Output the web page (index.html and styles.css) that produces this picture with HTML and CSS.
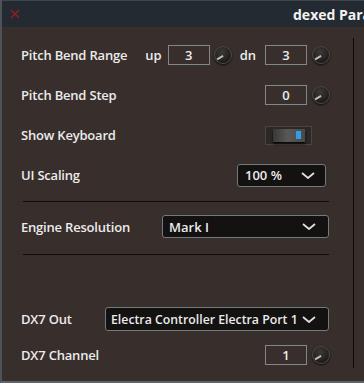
FILE: index.html
```html
<!DOCTYPE html>
<html lang="en">
<head>
  <meta charset="UTF-8">
  <title>dexed Parameters</title>
  <link rel="stylesheet" href="styles.css">
</head>
<body>
  <div class="window">
    <div class="titlebar">
      <svg class="close" viewBox="0 0 10 10"><path d="M1 1L9 9M9 1L1 9" stroke="#8e1d25" stroke-width="1.6"/></svg>
      <span class="title">dexed Parameters</span>
    </div>

    <div class="content">
      <div class="panel">
        <div class="row">
          <span class="label">Pitch Bend Range</span>
          <span class="tag">up</span>
          <div class="num">3</div>
          <div class="knob"></div>
          <span class="tag dn">dn</span>
          <div class="num">3</div>
          <div class="knob"></div>
        </div>

        <div class="row">
          <span class="label">Pitch Bend Step</span>
          <div class="num">0</div>
          <div class="knob"></div>
        </div>

        <div class="row">
          <span class="label">Show Keyboard</span>
          <div class="switch"><div class="rocker"><span class="led"></span></div></div>
        </div>

        <div class="row">
          <span class="label">UI Scaling</span>
          <div class="select scale">100 %<svg class="chev" viewBox="0 0 14 7"><path d="M1 1L7 6L13 1" fill="none" stroke="#e0e0e0" stroke-width="1.8"/></svg></div>
        </div>

        <div class="sep first"></div>

        <div class="row engine">
          <span class="label">Engine Resolution</span>
          <div class="select wide">Mark I<svg class="chev" viewBox="0 0 14 7"><path d="M1 1L7 6L13 1" fill="none" stroke="#e0e0e0" stroke-width="1.8"/></svg></div>
        </div>

        <div class="sep"></div>

        <div class="row out">
          <span class="label short">DX7 Out</span>
          <div class="select port"><span class="port-name">Electra Controller Electra Port 1</span><svg class="chev" viewBox="0 0 14 7"><path d="M1 1L7 6L13 1" fill="none" stroke="#e0e0e0" stroke-width="1.8"/></svg></div>
        </div>

        <div class="row channel">
          <span class="label">DX7 Channel</span>
          <div class="num">1</div>
          <div class="knob"></div>
        </div>
      </div>
    </div>
  </div>
</body>
</html>
```

FILE: styles.css
```css
* {
  margin: 0;
  padding: 0;
  box-sizing: border-box;
}
body {
  font-family: 'Open Sans', 'DejaVu Sans', sans-serif;
  background: #382e2b;
  color: #ebebeb;
  width: 364px;
  height: 383px;
  overflow: hidden;
}
.window {
  height: 383px;
  border-left: 2px solid #4c525a;
  border-bottom: 2px solid #5d646c;
  background: #382e2b;
}
.titlebar {
  height: 27px;
  background: #242a31;
  border-top: 1px solid #3f464e;
  display: flex;
  align-items: center;
  overflow: hidden;
  white-space: nowrap;
}
.close {
  width: 10px;
  height: 10px;
  margin-left: 8px;
  flex: none;
}
.title {
  margin-left: 273px;
  font-size: 14px;
  font-weight: 700;
  color: #f2f2f2;
  flex: none;
}
.content {
  padding-top: 11px;
}
.panel {
  width: 352px;
  height: 330px;
  border-right: 1px solid #0b0808;
  padding: 7px 23px 0 19px;
}
.row {
  display: flex;
  align-items: center;
  height: 20px;
  margin-bottom: 20px;
}
.label {
  flex: 1;
  font-size: 13px;
  font-weight: 600;
  letter-spacing: -0.2px;
  white-space: nowrap;
}
.label.short {
  flex: none;
  width: 84px;
}
.tag {
  font-size: 13px;
  font-weight: 600;
  margin-right: 6px;
}
.tag.dn {
  margin: 0 9px 0 8px;
}
.num {
  width: 42px;
  height: 20px;
  border: 1px solid #7f898b;
  font-size: 13px;
  font-weight: 600;
  text-align: center;
  line-height: 18px;
}
.knob {
  position: relative;
  width: 18px;
  height: 18px;
  margin-left: 4px;
  border-radius: 50%;
  background: radial-gradient(circle at 45% 35%, #3d3937, #1c1a19 70%);
  box-shadow: 0 1px 2px rgba(0, 0, 0, 0.8), inset 0 0 0 1px #4e4946;
}
.row .knob:last-child {
  margin-left: 5px;
}
.knob::after {
  content: '';
  position: absolute;
  left: 2px;
  top: 8.5px;
  width: 7px;
  height: 1.5px;
  background: #bdbdbd;
  transform-origin: right center;
  transform: rotate(-30deg);
}
.switch {
  width: 47px;
  height: 19px;
  margin-right: 18px;
  background: #2b2826;
  border: 1px solid #4a4542;
  display: flex;
  align-items: center;
  justify-content: center;
}
.rocker {
  width: 32px;
  height: 13px;
  background: linear-gradient(to right, #3a3836, #5a5856 45%, #4b4947);
  box-shadow: 0 2px 2px rgba(0, 0, 0, 0.8);
  display: flex;
  align-items: center;
  justify-content: flex-end;
  padding-right: 4px;
}
.led {
  width: 5px;
  height: 8px;
  background: #2c9fe6;
}
.select {
  display: flex;
  align-items: center;
  justify-content: space-between;
  height: 23px;
  background: #141111;
  border: 1px solid #717b7d;
  border-radius: 3px;
  font-size: 13px;
  font-weight: 600;
  padding: 0 10px 0 7px;
  white-space: nowrap;
}
.chev {
  width: 14px;
  height: 7px;
  flex: none;
}
.select.scale {
  width: 89px;
  margin-right: 4px;
}
.select.wide {
  width: 167px;
  margin-right: 1px;
  padding-left: 6px;
  padding-right: 12px;
}
.select.port {
  flex: 1;
  min-width: 0;
  height: 24px;
  margin-right: 1px;
  padding-left: 5px;
  padding-right: 12px;
  font-size: 12.3px;
}
.port-name {
  overflow: hidden;
}
.sep {
  height: 1px;
  background: #0e0b0a;
  margin: 0 1px 0 2px;
}
.sep.first {
  margin-top: -4px;
}
.row.engine {
  height: 23px;
  margin: 13px 0 16px;
}
.row.out {
  height: 24px;
  margin: 52px 0 14px;
}
```
